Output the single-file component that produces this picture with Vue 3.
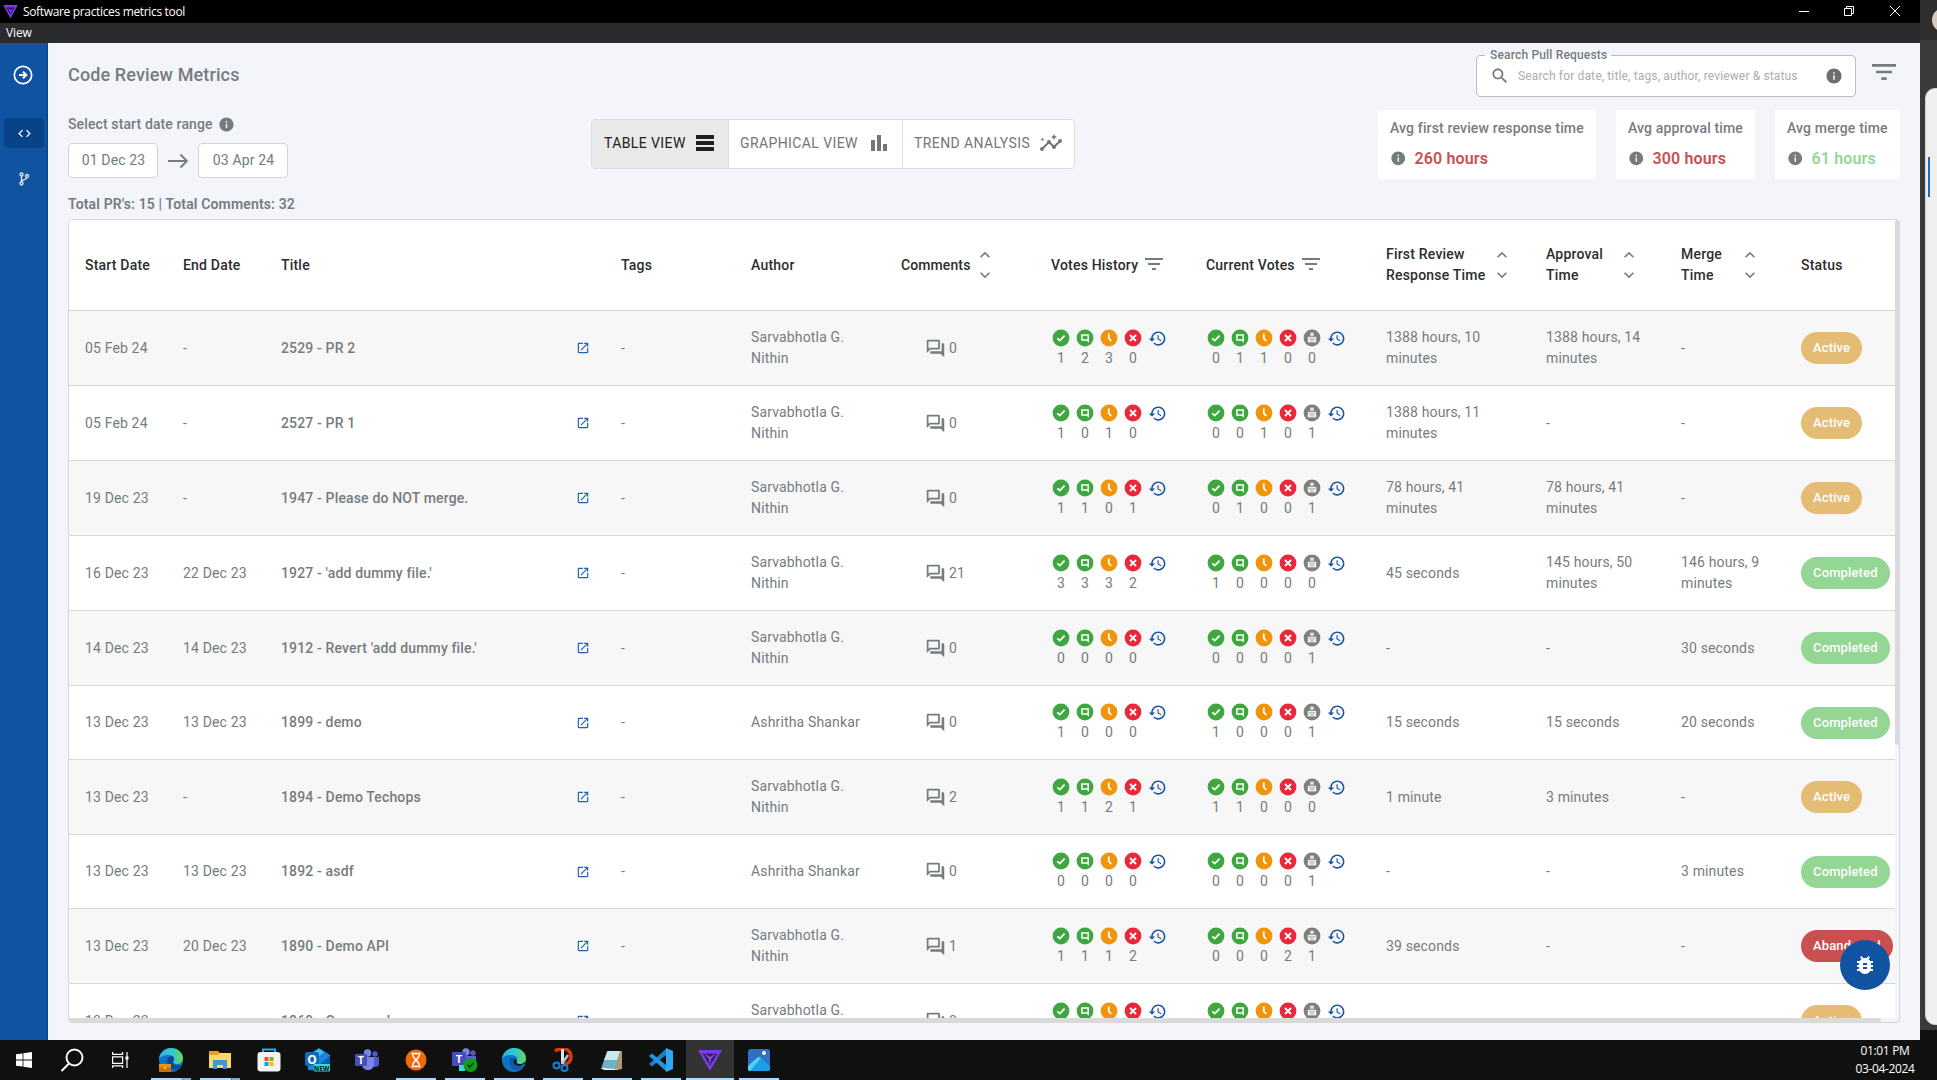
<script setup>
const P = {
  info: 'M12 2C6.48 2 2 6.48 2 12s4.48 10 10 10 10-4.48 10-10S17.52 2 12 2zm1 15h-2v-6h2v6zm0-8h-2V7h2v2z',
  filter: 'M10 18h4v-2h-4v2zM3 6v2h18V6H3zm3 7h12v-2H6v2z',
  up: 'M7.41 15.41 12 10.83l4.59 4.58L18 14l-6-6-6 6z',
  down: 'M7.41 8.59 12 13.17l4.59-4.58L18 10l-6 6-6-6z',
  launch: 'M19 19H5V5h7V3H5c-1.11 0-2 .9-2 2v14c0 1.1.89 2 2 2h14c1.1 0 2-.9 2-2v-7h-2v7zM14 3v2h3.59l-9.83 9.83 1.41 1.41L19 6.41V10h2V3h-7z',
  chat: 'M15 4v7H5.17l-.59.59-.58.58V4h11m1-2H3c-.55 0-1 .45-1 1v14l4-4h10c.55 0 1-.45 1-1V3c0-.55-.45-1-1-1zm5 4h-2v9H6v2c0 .55.45 1 1 1h11l4 4V7c0-.55-.45-1-1-1z',
  insights: 'M21 8c-1.45 0-2.26 1.44-1.93 2.51l-3.55 3.56c-.3-.09-.74-.09-1.04 0l-2.55-2.55C12.27 10.45 11.46 9 10 9c-1.45 0-2.27 1.44-1.93 2.52l-4.56 4.55C2.44 15.74 1 16.55 1 18c0 1.1.9 2 2 2 1.45 0 2.26-1.44 1.93-2.51l4.55-4.56c.3.09.74.09 1.04 0l2.55 2.55C12.73 16.55 13.54 18 15 18c1.45 0 2.27-1.44 1.93-2.52l3.56-3.55C21.56 12.26 23 11.45 23 10c0-1.1-.9-2-2-2zM15 9l.94-2.07L18 6l-2.06-.93L15 3l-.92 2.07L12 6l2.08.93zM3.5 11 4 9l2-.5L4 8l-.5-2L3 8l-2 .5L3 9z',
  bars: 'M4 9h4v11H4zm12 4h4v7h-4zm-6-9h4v16h-4z',
  rows: 'M3 4h18v4H3zm0 6h18v4H3zm0 6h18v4H3z',
  search: 'M15.5 14h-.79l-.28-.27C15.41 12.59 16 11.11 16 9.5 16 5.91 13.09 3 9.5 3S3 5.91 3 9.5 5.91 16 9.5 16c1.61 0 3.09-.59 4.23-1.57l.27.28v.79l5 4.99L20.49 19l-4.99-5zm-6 0C7.01 14 5 11.99 5 9.5S7.01 5 9.5 5 14 7.01 14 9.5 11.99 14 9.5 14z',
  history: 'M13 3c-4.97 0-9 4.03-9 9H1l3.89 3.89.07.14L9 12H6c0-3.87 3.13-7 7-7s7 3.13 7 7-3.13 7-7 7c-1.93 0-3.68-.79-4.94-2.06l-1.42 1.42C8.27 19.99 10.51 21 13 21c4.97 0 9-4.03 9-9s-4.03-9-9-9zm-1 5v5l4.28 2.54.72-1.21-3.5-2.08V8H12z',
  code: 'M9.4 16.6 4.8 12l4.6-4.6L8 6l-6 6 6 6 1.4-1.4zm5.2 0 4.6-4.6-4.6-4.6L16 6l6 6-6 6-1.4-1.4z',
  bug: 'M20 8h-2.81c-.45-.78-1.07-1.45-1.82-1.96L17 4.41 15.59 3l-2.17 2.17C12.96 5.06 12.49 5 12 5s-.96.06-1.41.17L8.41 3 7 4.41l1.62 1.63C7.88 6.55 7.26 7.22 6.81 8H4v2h2.09c-.05.33-.09.66-.09 1v1H4v2h2v1c0 .34.04.67.09 1H4v2h2.81c1.04 1.79 2.97 3 5.19 3s4.15-1.21 5.19-3H20v-2h-2.09c.05-.33.09-.66.09-1v-1h2v-2h-2v-1c0-.34-.04-.67-.09-1H20V8zm-6 8h-4v-2h4v2zm0-4h-4v-2h4v2z',
}

const stats = [
  { label: 'Avg first review response time', value: '260 hours', tone: 'bad', cls: 's1' },
  { label: 'Avg approval time', value: '300 hours', tone: 'bad', cls: 's2' },
  { label: 'Avg merge time', value: '61 hours', tone: 'good', cls: 's3' },
]

const columns = [
  { label: 'Start Date' }, { label: 'End Date' }, { label: 'Title' }, { label: 'Tags' }, { label: 'Author' },
  { label: 'Comments', sort: true }, { label: 'Votes History', filter: true }, { label: 'Current Votes', filter: true },
  { label: 'First Review Response Time', sort: true }, { label: 'Approval Time', sort: true },
  { label: 'Merge Time', sort: true }, { label: 'Status' },
]

const N = 'Sarvabhotla G. Nithin'
const A = 'Ashritha Shankar'
const r = (start, end, title, author, comments, hist, cur, first, approval, merge, status) =>
  ({ start, end, title, author, comments, hist: [...hist], cur: [...cur], first, approval, merge, status })
const rows = [
  r('05 Feb 24', '-', '2529 - PR 2', N, 0, '1230', '01100', '1388 hours, 10 minutes', '1388 hours, 14 minutes', '-', 'Active'),
  r('05 Feb 24', '-', '2527 - PR 1', N, 0, '1010', '00101', '1388 hours, 11 minutes', '-', '-', 'Active'),
  r('19 Dec 23', '-', '1947 - Please do NOT merge.', N, 0, '1101', '01001', '78 hours, 41 minutes', '78 hours, 41 minutes', '-', 'Active'),
  r('16 Dec 23', '22 Dec 23', "1927 - 'add dummy file.'", N, 21, '3332', '10000', '45 seconds', '145 hours, 50 minutes', '146 hours, 9 minutes', 'Completed'),
  r('14 Dec 23', '14 Dec 23', "1912 - Revert 'add dummy file.'", N, 0, '0000', '00001', '-', '-', '30 seconds', 'Completed'),
  r('13 Dec 23', '13 Dec 23', '1899 - demo', A, 0, '1000', '10001', '15 seconds', '15 seconds', '20 seconds', 'Completed'),
  r('13 Dec 23', '-', '1894 - Demo Techops', N, 2, '1121', '11000', '1 minute', '3 minutes', '-', 'Active'),
  r('13 Dec 23', '13 Dec 23', '1892 - asdf', A, 0, '0000', '00001', '-', '-', '3 minutes', 'Completed'),
  r('13 Dec 23', '20 Dec 23', '1890 - Demo API', N, 1, '1112', '00021', '39 seconds', '-', '-', 'Abandoned'),
  r('13 Dec 23', '-', '1869 - Come and', N, 0, '0000', '00000', '-', '-', '-', 'Active'),
]
const kinds = ['ok', 'note', 'wait', 'no', 'none']
</script>

<template>
  <div class="screen">
    <div class="desktop">
      <header class="titlebar">
        <svg class="applogo" width="15" height="14" viewBox="0 0 24 23"><path d="M0 0h24L12 22z" fill="#7c3aed" /><path d="M5 4h14l-7 12z" fill="#1c0b3e" /><path d="M7 4l5 4 5-4-5 10z" fill="#7c3aed" /></svg>
        <span class="apptitle">Software practices metrics tool</span>
        <svg class="winbtns" width="110" height="20" viewBox="0 0 110 20" fill="none" stroke="#fff"><path d="M4 10.5h10M49.500 7.500h7v7h-7zM51.500 7.500v-2h7v7h-2M95 5l10 10M105 5 95 15" /></svg>
      </header>
      <div class="menubar">View</div>

      <div class="app">
        <nav class="side">
          <svg class="go" width="20" height="20" viewBox="0 0 20 20"><circle cx="10" cy="10" r="8.700" fill="none" stroke="#fff" stroke-width="1.700" /><path d="M6 10h7M10 6.800 13.300 10 10 13.200" fill="none" stroke="#fff" stroke-width="2" /></svg>
          <div class="navitem on"><svg width="15" height="15" viewBox="0 0 24 24" fill="#fff"><path :d="P.code" /></svg></div>
          <div class="navitem br"><svg width="12" height="14" viewBox="0 0 12 14" fill="none" stroke="#e6eef8" stroke-width="1.300"><circle cx="3.500" cy="2.500" r="1.500" /><circle cx="3.500" cy="11.500" r="1.500" /><circle cx="9" cy="4" r="1.500" /><path d="M3.500 4v6M9 5.500C9 8 4 7 3.500 9.500" /></svg></div>
        </nav>

        <main class="main">
          <div class="toprow">
            <h1>Code Review Metrics</h1>
            <div class="search">
              <span class="legend">Search Pull Requests</span>
              <svg width="20" height="20" viewBox="0 0 24 24" fill="#757575"><path :d="P.search" /></svg>
              <span class="ph">Search for date, title, tags, author, reviewer &amp; status</span>
              <svg class="sinfo" width="18" height="18" viewBox="0 0 24 24" fill="#6e6e6e"><path :d="P.info" /></svg>
            </div>
            <svg class="bigfilter" width="32" height="32" viewBox="0 0 24 24" fill="#727c80"><path :d="P.filter" /></svg>
          </div>

          <div class="controls">
            <div class="range">
              <div class="rlabel">Select start date range <svg width="17" height="17" viewBox="0 0 24 24" fill="#757c80"><path :d="P.info" /></svg></div>
              <div class="dates">
                <span class="date">01 Dec 23</span>
                <svg width="20" height="16" viewBox="0 0 20 16" fill="none" stroke="#757c80" stroke-width="1.900"><path d="M0 8h18.500M12.500 1.500 19 8l-6.500 6.500" /></svg>
                <span class="date">03 Apr 24</span>
              </div>
              <div class="totals">Total PR's: 15 | Total Comments: 32</div>
            </div>
            <div class="toggle">
              <div class="tg t1 sel">TABLE VIEW <svg width="24" height="24" viewBox="0 0 24 24"><path :d="P.rows" /></svg></div>
              <div class="tg t2">GRAPHICAL VIEW <svg width="24" height="24" viewBox="0 0 24 24"><path :d="P.bars" /></svg></div>
              <div class="tg t3">TREND ANALYSIS <svg width="24" height="24" viewBox="0 0 24 24"><path :d="P.insights" /></svg></div>
            </div>
            <div class="stats">
              <div v-for="s in stats" :key="s.label" class="stat" :class="s.cls">
                <div class="slabel">{{ s.label }}</div>
                <div class="sval" :class="s.tone"><svg width="16.500" height="16.500" viewBox="0 0 24 24" fill="#757c80"><path :d="P.info" /></svg>{{ s.value }}</div>
              </div>
            </div>
          </div>

          <section class="tablebox">
            <div class="scroller">
              <div class="thead tr">
                <div v-for="(c, i) in columns" :key="c.label" class="td" :class="'c' + i">
                  <span class="hl">{{ c.label }}</span>
                  <span v-if="c.sort" class="sort">
                    <svg width="20" height="20" viewBox="0 0 24 24" fill="#757c80"><path :d="P.up" /></svg>
                    <svg width="20" height="20" viewBox="0 0 24 24" fill="#757c80"><path :d="P.down" /></svg>
                  </span>
                  <svg v-if="c.filter" class="fl" width="24" height="24" viewBox="0 0 24 24" fill="#727c80"><path :d="P.filter" /></svg>
                </div>
              </div>
              <div v-for="(row, i) in rows" :key="i" class="tr row" :class="{ odd: i % 2 === 0, short: row.author === A }">
                <div class="td">{{ row.start }}</div>
                <div class="td">{{ row.end }}</div>
                <div class="td title"><span>{{ row.title }}</span><svg width="14" height="14" viewBox="0 0 24 24" fill="#1e62b0"><path :d="P.launch" /></svg></div>
                <div class="td">-</div>
                <div class="td author"><span>{{ row.author }}</span></div>
                <div class="td comm"><svg width="21" height="21" viewBox="0 0 24 24" fill="#757c80"><path :d="P.chat" /></svg>{{ row.comments }}</div>
                <div v-for="(set, g) in [row.hist, row.cur]" :key="g" class="td votes">
                  <div v-for="(v, k) in set" :key="k" class="vote">
                    <svg width="18" height="18" viewBox="0 0 18 18">
                      <circle cx="9" cy="9" r="8.400" :class="kinds[k]" />
                      <path v-if="k === 0" d="M5.300 9.300 7.800 11.600 12.600 6.700" class="ln" />
                      <path v-else-if="k === 1" d="M5.900 6.100h6.300v6L10.900 11H5.900z" class="ln thin" />
                      <path v-else-if="k === 2" d="M8.800 4.600V9.400L11.300 12" class="ln" />
                      <path v-else-if="k === 3" d="M6 6l6 6M12 6l-6 6" class="ln" />
                      <g v-else><path d="M7.200 3.600h3.600v3.200H7.200z" fill="#e2e2e2" /><path d="M4.800 7.800h8.400v5.600H4.800z" fill="#f0f0f0" /><path d="M6 9.800h6M7.500 11.800h3" stroke="#9a9a98" stroke-width=".8" /></g>
                    </svg>
                    <span>{{ v }}</span>
                  </div>
                  <div class="vote"><svg width="19" height="19" viewBox="0 0 24 24" fill="#1756a5"><path :d="P.history" /></svg></div>
                </div>
                <div class="td dur">{{ row.first }}</div>
                <div class="td">{{ row.approval }}</div>
                <div class="td">{{ row.merge }}</div>
                <div class="td"><span class="chip" :class="row.status">{{ row.status }}</span></div>
              </div>
            </div>
            <div class="vbar"><div class="vthumb"></div></div>
            <div class="hbar"><div class="hthumb"></div></div>
          </section>
        </main>
        <div class="fab"><svg width="24" height="24" viewBox="0 0 24 24" fill="#fff"><path :d="P.bug" /></svg></div>
      </div>

      <footer class="taskbar">
        <div class="tb w48"><svg width="16" height="16" viewBox="0 0 16 16" fill="#fff"><path d="M0 2.300 6.600 1.400v6.200H0zM7.400 1.300 16 0v7.600H7.400zM0 8.400h6.600v6.200L0 13.700zM7.400 8.400H16V16l-8.600-1.300z" /></svg></div>
        <div class="tb w48"><svg width="24" height="24" viewBox="0 0 24 24" fill="none" stroke="#fff" stroke-width="1.900"><circle cx="14.500" cy="9.500" r="8" /><path d="M9 15.500 1.500 23" /></svg></div>
        <div class="tb w48"><svg width="17" height="16" viewBox="0 0 17 16" fill="none" stroke="#fff" stroke-width="1.200"><path d="M.6 0v2.400h10V0M.6 4.800h10v6.500H.6zM.6 16v-2.200h10V16M15 0v16" /><path d="M13.500 4.500h3v3h-3z" fill="#fff" stroke="none" /></svg></div>
        <div class="tb app1 run two"><svg width="26" height="26" viewBox="0 0 26 26"><defs><linearGradient id="eg" x1="0" x2="1"><stop offset="0" stop-color="#2bb5e8" /><stop offset=".6" stop-color="#35c8c6" /><stop offset="1" stop-color="#68d84e" /></linearGradient></defs><circle cx="13" cy="13" r="12" fill="#1173c8" /><path d="M1 12C2 5 7 1 13 1c7 0 12 5 12 10 0 4-3 6-6 6-4 0-4-2-3-4 1-4-3-5-6-5-4 0-7 1-9 4z" fill="url(#eg)" /><path d="M9 15c0-4 3-6 5-6 2 1 3 3 1 5-1 3 2 5 5 4.500 2 0 3-1 4-2-2 5-5 6-8 6-4 0-7-3-7-7.500z" fill="#0a4a94" /><path d="M1 17h12v8H1z" fill="#c9700d" /><path d="M1 17h12v3.500H1z" fill="#e8930c" /><circle cx="7" cy="21" r="1" fill="#fde047" /></svg></div>
        <div class="tb run two"><svg width="22" height="20" viewBox="0 0 22 20"><path d="M0 1h9l2 2h11v15H0z" fill="#e8a317" /><path d="M0 5h9l2-2h11v15H0z" fill="#ffd766" /><path d="M4 10h14v9h-4v-4H8v4H4z" fill="#3f96d8" /></svg></div>
        <div class="tb"><svg width="24" height="24" viewBox="0 0 24 24"><path d="M6 5V1.500h12V5" fill="none" stroke="#29a9ee" stroke-width="2" /><rect x=".5" y="4" width="23" height="19.500" rx="3" fill="#f3f3f3" /><path d="M7.500 9h4v4h-4z" fill="#f25022" /><path d="M12.500 9h4v4h-4z" fill="#7fba00" /><path d="M7.500 14h4v4h-4z" fill="#00a4ef" /><path d="M12.500 14h4v4h-4z" fill="#ffb900" /></svg></div>
        <div class="tb"><svg width="26" height="24" viewBox="0 0 26 24"><path d="M3 7 14 0l11 7v15H3z" fill="#1a86d9" /><path d="M5 6 14 1l5 3-9 8z" fill="#3cc0f0" /><path d="m25 8-10 8 10 6z" fill="#0b5cb5" /><rect y="4" width="14" height="14" rx="2" fill="#0f6cbd" /><text x="7" y="15.500" font-size="12" font-weight="700" text-anchor="middle" fill="#fff" font-family="Open Sans, sans-serif">O</text><rect x="8.500" y="16" width="16.500" height="7.500" rx="1" fill="#2fe0d4" /><text x="16.700" y="22.500" font-size="6.500" font-weight="800" text-anchor="middle" fill="#07303a" font-family="Open Sans, sans-serif">NEW</text></svg></div>
        <div class="tb"><svg width="24" height="22" viewBox="0 0 24 22"><circle cx="20" cy="5" r="2.700" fill="#5059c9" /><path d="M16 8h8v6c0 3-2 4-4 4s-4-1-4-3z" fill="#5059c9" /><circle cx="12.500" cy="4" r="3.700" fill="#7b83eb" /><path d="M7 8h12v7c0 4-3 6-6 6s-6-2-6-6z" fill="#7b83eb" /><rect y="5" width="12" height="12" rx="1" fill="#464eb8" /><text x="6" y="14.500" font-size="10" font-weight="700" text-anchor="middle" fill="#fff" font-family="Open Sans, sans-serif">T</text></svg></div>
        <div class="tb run"><svg width="22" height="22" viewBox="0 0 22 22"><circle cx="11" cy="11" r="10.500" fill="#f06a0a" /><path d="M6.500 4.500h9M6.500 17.500h9M7.500 5c0 4 3 4 3 6s-3 2-3 6M14.500 5c0 4-3 4-3 6s3 2 3 6" fill="none" stroke="#fff" stroke-width="1.500" /></svg></div>
        <div class="tb run"><svg width="26" height="24" viewBox="0 0 26 24"><circle cx="21" cy="5" r="2.700" fill="#5059c9" /><circle cx="14" cy="4" r="3.700" fill="#7b83eb" /><path d="M8 8h16v9H8z" fill="#5b64d6" /><rect y="4" width="14" height="14" rx="1" fill="#464eb8" /><text x="7" y="15" font-size="11" font-weight="700" text-anchor="middle" fill="#fff" font-family="Open Sans, sans-serif">T</text><path d="M7 17h6v6H7z" fill="#2fe0d4" /><circle cx="18.500" cy="17" r="7" fill="#139c1a" /><path d="m15.500 17 2 2 4-4" fill="none" stroke="#052e08" stroke-width="1.500" /></svg></div>
        <div class="tb run"><svg width="26" height="26" viewBox="0 0 26 26"><circle cx="13" cy="13" r="12" fill="#1173c8" /><path d="M1 12C2 5 7 1 13 1c7 0 12 5 12 10 0 4-3 6-6 6-4 0-4-2-3-4 1-4-3-5-6-5-4 0-7 1-9 4z" fill="url(#eg)" /><path d="M13 12c-2 4 1 7 6 7l5-2.500 1-4.500c0 3-3 5-6 5-4 0-4-2-3-4z" fill="#101010" /><path d="M9 12c-2 6 2 11 7 11 3 0 6-2 7.500-4.500-3 1.500-6 1-8 0-3-1.500-4-4-2-7-2-1.500-4 0-4.500.5z" fill="#0c59a8" /></svg></div>
        <div class="tb run"><svg width="22" height="24" viewBox="0 0 22 24"><path d="M3 3c6-4 16-3 16 6 0 5-3 7-8 8" fill="none" stroke="#d83b01" stroke-width="3.500" /><path d="M9 1h3v15H9z" fill="#e3e6e8" /><path d="m16 7-6 9" stroke="#b8bec3" stroke-width="2.500" /><circle cx="4.500" cy="17.500" r="3" fill="none" stroke="#1380d8" stroke-width="2" /><circle cx="12.500" cy="20" r="3" fill="none" stroke="#1380d8" stroke-width="2" /></svg></div>
        <div class="tb run"><svg width="22" height="22" viewBox="0 0 22 22"><path d="M6 2h15v18l-6 1z" fill="#a99b77" /><path d="M6 2h13l-5 18H0z" fill="#6fb3c0" /><path d="M7 2h12l-3 9H3z" fill="#c9e9ee" /><path d="m0 19 14 1 4 1H3z" fill="#eef4f5" /></svg></div>
        <div class="tb run"><svg width="24" height="24" viewBox="0 0 24 24"><path d="M18 0v6L3 18.500 0 16z" fill="#1a80c8" /><path d="M18 24v-6L3 5.500 0 8z" fill="#2196e0" /><path d="m17 0 7 3v18l-7 3z" fill="#30a8f4" /></svg></div>
        <div class="tb run cur"><svg width="24" height="21" viewBox="0 0 24 21"><path d="M0 0h24L12 21z" fill="#7c3aed" /><path d="M4.500 3.500h15L12 16z" fill="#33234f" /><path d="M5 2.500 12 7l7-4.500-6 6.500-1 7-1-7z" fill="#8b4bf2" /></svg></div>
        <div class="tb run"><svg width="22" height="22" viewBox="0 0 22 22"><rect width="22" height="22" rx="2.500" fill="#2f6fc4" /><path d="M0 17 9 9q2-2 4 0l9 8v3a2 2 0 0 1-2 2H2a2 2 0 0 1-2-2z" fill="#1b9fe6" /><path d="m9 9-9 8v3a2 2 0 0 0 2 2L13 9q-2-2-4 0z" fill="#55d0f7" /><circle cx="16" cy="4" r="1.900" fill="#fff" /></svg></div>
        <div class="clock"><div>01:01 PM</div><div>03-04-2024</div></div>
      </footer>
    </div>
    <aside class="strip">
      <div class="striptop"><i class="avatar"></i></div>
      <div class="stripmid"><div class="panel"><i class="mark"></i></div></div>
      <div class="stripend"></div>
    </aside>
  </div>
</template>

<style>
html, body { margin: 0; overflow: hidden; }
</style>

<style scoped>
* { box-sizing: border-box; }
svg { display: block; flex: none; }
.screen { display: flex; width: 1937px; height: 1080px; overflow: hidden; font-family: Roboto, "Liberation Sans", sans-serif; font-size: 14px; color: #757c80; }
.desktop { width: 1920px; flex: none; display: flex; flex-direction: column; }

.titlebar { height: 23px; background: #000; display: flex; align-items: center; font: 12px "Open Sans", sans-serif; color: #fff; }
.applogo { margin-left: 3px; }
.apptitle { margin-left: 5px; letter-spacing: -.34px; }
.winbtns { margin-left: auto; margin-right: 15px; margin-top: -2px; }
.menubar { height: 20px; background: #2a2b2e; color: #fff; font: 12px/19px "Open Sans", sans-serif; padding-left: 6px; letter-spacing: -.1px; }

.app { height: 997px; display: flex; position: relative; background: #f4f5fa; }
.side { width: 48px; background: #1053a0; border-right: 1px solid #0a4488; display: flex; flex-direction: column; align-items: center; padding-top: 22px; }
.go { margin-right: 1px; }
.navitem { width: 40px; height: 30px; margin-top: 33px; margin-left: 1px; border-radius: 4px; display: flex; align-items: center; justify-content: center; }
.navitem.on { background: #064387; }
.navitem.br { margin-top: 16px; }

.main { width: 1852px; margin-left: 20px; }
.toprow { height: 67px; display: flex; align-items: flex-start; }
h1 { margin: 20px 0 0; font-size: 18px; line-height: 24px; font-weight: 500; letter-spacing: .13px; color: #757c80; }
.search { position: relative; margin-left: auto; margin-top: 12px; width: 380px; height: 42px; border: 1px solid #bdbdbd; border-radius: 4px; background: #fff; display: flex; align-items: center; padding: 0 12px 1px 13px; }
.legend { position: absolute; left: 8px; top: -10px; height: 19px; line-height: 19px; padding: 0 5px; font-size: 12px; font-weight: 500; letter-spacing: .17px; white-space: nowrap; background: linear-gradient(#f4f5fa 0 9px, #fff 9px); width: 126px; }
.ph { margin-left: 8px; padding-top: 1px; font-size: 12px; letter-spacing: .145px; color: #a8adaf; white-space: nowrap; }
.sinfo { margin-left: auto; }
.bigfilter { margin: 13px 20px 0 12px; }

.controls { height: 109px; display: flex; align-items: flex-start; }
.range { width: 523px; }
.rlabel { display: flex; align-items: center; gap: 5px; height: 28px; font-weight: 500; letter-spacing: .12px; }
.dates { display: flex; align-items: center; gap: 10px; margin-top: 5px; }
.date { width: 90px; height: 35px; border: 1px solid #d2d4d6; border-radius: 4px; background: #fff; text-align: center; line-height: 33px; letter-spacing: .15px; padding-left: 1px; }
.totals { margin-top: 16px; line-height: 20px; font-weight: 600; letter-spacing: .15px; }
.toggle { margin-top: 9px; display: flex; height: 50px; border: 1px solid #dcdddf; border-radius: 4px; background: #fff; overflow: hidden; }
.tg { display: flex; align-items: center; justify-content: space-between; letter-spacing: .4px; padding: 0 11px 3px 12px; border-left: 1px solid #dcdddf; fill: #757575; color: #757575; white-space: nowrap; }
.t1 { width: 136px; border-left: 0; }
.t2 { width: 174px; padding-left: 11px; }
.t3 { width: 172px; padding-left: 11px; }
.tg.sel { background: #e9e9ea; color: #212121; fill: #212121; }
.stats { margin-left: auto; margin-right: 20px; display: flex; gap: 20px; }
.stat { height: 69px; background: #fff; padding: 8px 0 0 12px; white-space: nowrap; }
.s1 { width: 218px; } .s2 { width: 139px; } .s3 { width: 125px; }
.slabel { font-weight: 500; line-height: 20px; letter-spacing: .15px; }
.sval { margin-top: 11px; display: flex; align-items: center; gap: 8px; font-size: 16px; line-height: 20px; font-weight: 600; letter-spacing: .15px; }
.sval svg { margin-top: -1px; }
.bad { color: #c94f50; } .good { color: #94d694; }

.tablebox { position: relative; width: 1832px; height: 804px; border: 1px solid #d6d7d8; border-radius: 4px; background: #f4f5fb; overflow: hidden; }
.scroller { width: 1826px; height: 798px; overflow: hidden; background: #fff; }
.tr { display: grid; grid-template-columns: 98px 98px 340px 130px 150px 150px 155px 180px 160px 135px 120px 110px; border-bottom: 1px solid #d6d7d8; }
.thead { height: 91px; color: #2b2d2f; font-weight: 500; }
.td { display: flex; align-items: center; padding-left: 16px; line-height: 21px; letter-spacing: .15px; }
.thead .td { letter-spacing: .2px; }
.c5 .hl { letter-spacing: .1px; }
.row { height: 75px; }
.row.short { height: 74px; }
.odd { background: #f7f7f7; }
.dur { padding-right: 24px; }
.sort { display: flex; flex-direction: column; align-items: center; margin-top: -1px; }
.c5 .sort { margin-left: 5px; }
.c8 .sort, .c9 .sort, .c10 .sort { margin-left: auto; }
.c8 .sort { margin-right: 18px; } .c9 .sort { margin-right: 26px; } .c10 .sort { margin-right: 25px; }
.c8 .hl { width: 104px; } .c9 .hl { width: 64px; } .c10 .hl { width: 50px; }
.fl { margin-left: 4px; margin-top: -2px; }
.title { font-weight: 500; justify-content: space-between; padding-right: 15px; }
.author span { width: 112px; }
.comm { padding-left: 40px; gap: 3px; }
.votes { padding-left: 14px; align-items: flex-start; padding-top: 18px; }
.vote { width: 24px; display: flex; flex-direction: column; align-items: center; flex: none; }
.vote span { line-height: 23px; letter-spacing: 0; }
.short .votes { padding-top: 17px; }
.ok, .note { fill: #3ea740; } .wait { fill: #f0940c; } .no { fill: #ea283c; } .none { fill: #7f7f7c; }
.ln { fill: none; stroke: #fff; stroke-width: 1.800; }
.ln.thin { stroke-width: 1.500; }
.chip { height: 32px; line-height: 31px; border-radius: 16px; padding: 0 12px; color: #fff; font-size: 13px; font-weight: 500; letter-spacing: .14px; flex: none; }
.Active { background: #e4bc73; } .Completed { background: #94d694; } .Abandoned { background: #c94f50; }
.vbar { position: absolute; right: 0; top: 0; width: 4px; height: 798px; }
.vthumb { height: 525px; background: #dadada; border-radius: 2px; }
.hbar { position: absolute; left: 0; bottom: 0; width: 1826px; height: 4px; }
.hthumb { width: 1812px; height: 4px; background: #dadada; border-radius: 2px; }
.fab { position: absolute; left: 1840px; top: 897px; width: 50px; height: 50px; border-radius: 50%; background: #1053a0; display: flex; align-items: center; justify-content: center; }

.taskbar { height: 40px; background: #101010; display: flex; align-items: stretch; }
.tb { width: 48px; margin-right: 1px; display: flex; align-items: center; justify-content: center; position: relative; }
.tb.w48 { width: 48px; margin-right: 0; }
.tb.app1 { margin-left: 3px; }
.run::after { content: ""; position: absolute; left: 4px; right: 4px; bottom: 0; height: 2px; background: #a9dcfa; }
.two::after { background: linear-gradient(90deg, #a9dcfa 0 31px, #5f7787 31px 32px, #8bacc0 32px); }
.cur { background: #333; }
.cur::after { left: 0; right: 0; }
.clock { margin-left: auto; width: 70px; text-align: center; color: #fff; font: 12px/18px "Open Sans", sans-serif; letter-spacing: -.35px; padding-top: 2px; }

.strip { width: 17px; display: flex; flex-direction: column; background: #3b3a39; overflow: hidden; }
.striptop { height: 40px; background: #2e2e2e; padding: 8px 0 0 12px; }
.avatar { display: block; width: 24px; height: 24px; border-radius: 50%; background: #d6c8bd; }
.stripmid { height: 990px; padding: 48px 0 5px 5px; }
.panel { width: 24px; height: 937px; background: #efeff0; border: 1px solid #d5d5d5; border-radius: 10px; padding-top: 68px; }
.mark { display: block; margin-left: 2px; width: 2px; height: 40px; background: #1070c8; }
.stripend { height: 50px; background: #101010; }
</style>
